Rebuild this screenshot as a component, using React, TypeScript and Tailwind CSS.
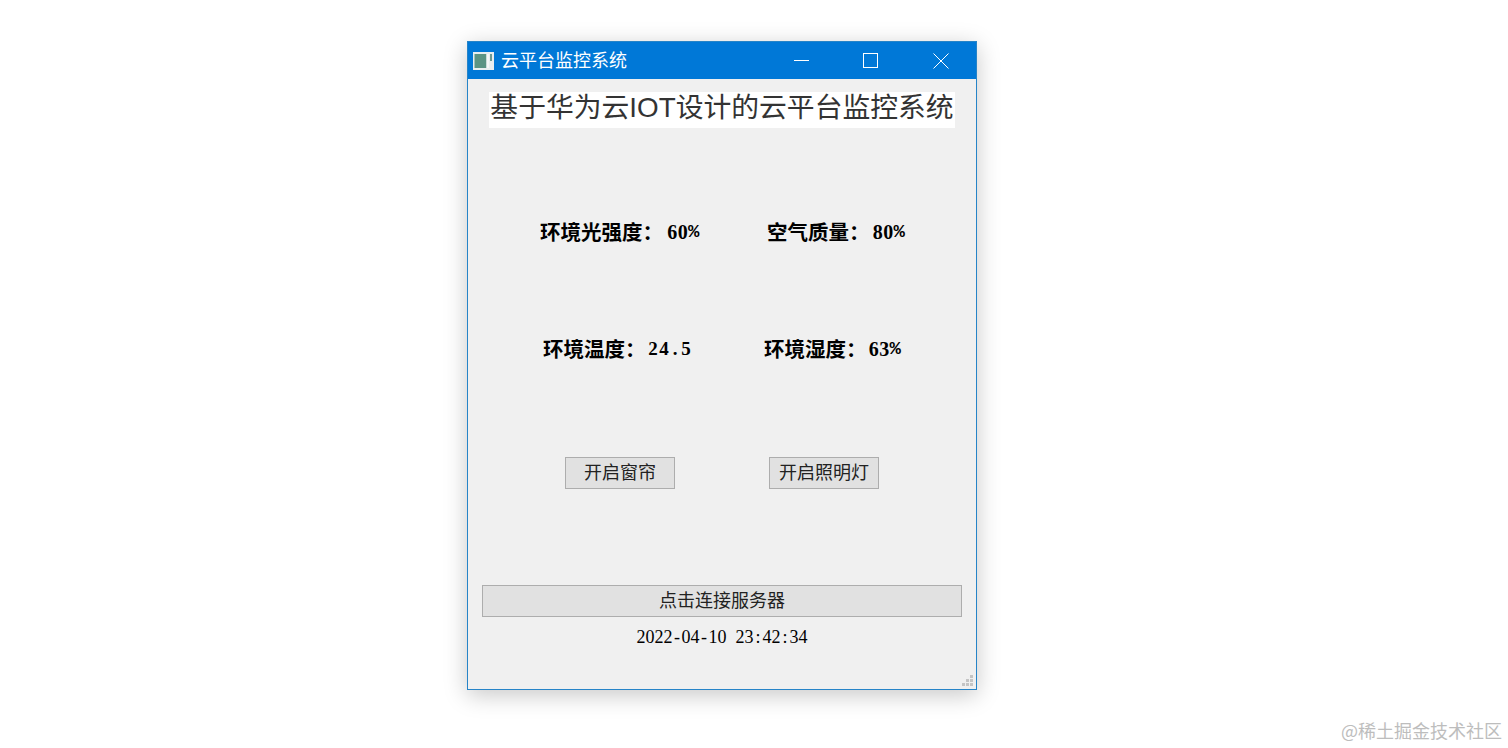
const cjk = { fontFamily: '"Noto Sans CJK SC", sans-serif' };
const serif = { fontFamily: '"Liberation Serif", "Noto Sans CJK SC", serif' };

function Fixed({ text, w }: { text: string; w: string }) {
  return (
    <>
      {text.split("").map((c, i) => (
        <span key={i} className={`inline-block text-center ${w}`}>
          {c === " " ? "\u00a0" : c}
        </span>
      ))}
    </>
  );
}

function Stat({ label, children }: { label: string; children: React.ReactNode }) {
  return (
    <div className="flex h-6 items-center whitespace-nowrap font-bold text-black leading-6">
      <span className="pb-[2px] text-[20.5px] font-bold" style={cjk}>{label}</span>
      {children}
    </div>
  );
}

function Button({ label, className }: { label: string; className: string }) {
  return (
    <button
      className={`flex h-8 items-center justify-center border border-[#adadad] bg-[#e1e1e1] pb-[4px] text-[18px] text-[#222] ${className}`}
      style={cjk}
    >
      {label}
    </button>
  );
}

function Percent({ digits, className }: { digits: string; className: string }) {
  return (
    <span className={`flex items-center font-bold ${className}`}>
      <span className="text-[20px]" style={serif}><Fixed text={digits} w="w-[10.5px]" /></span>
      <span className="text-[19px]" style={{ fontFamily: '"Liberation Mono", monospace' }}>%</span>
    </span>
  );
}

export default function App() {
  return (
    <div className="relative h-[748px] w-[1508px] overflow-hidden bg-white">
      <div className="ml-[467px] pt-[41px]">
        <div className="relative flex h-[649px] w-[510px] flex-col border border-[#2684c8] bg-[#f0f0f0] shadow-[0_5px_22px_rgba(0,0,0,0.22)]">
          {/* title bar */}
          <div className="flex h-[37px] shrink-0 items-center bg-[#0078d7] text-white">
            <svg className="ml-[5px] shrink-0" width="21" height="18" viewBox="0 0 21 18">
              <rect width="21" height="18" fill="#e8eef0" />
              <rect x="1.5" y="2" width="12" height="14" fill="#5a9484" />
              <rect x="13.5" y="2" width="2.5" height="14" fill="#f4f7f7" />
              <rect x="17" y="2" width="2" height="7" fill="#6d9a92" />
            </svg>
            <span className="ml-[7px] pb-[4px] text-[18px] leading-none" style={cjk}>云平台监控系统</span>
            <div className="ml-auto flex h-full">
              <div className="flex w-[70px] items-center justify-center pl-[1px]">
                <svg width="16" height="16" viewBox="0 0 16 16" stroke="white" fill="none"><path d="M0 7.5H15" /></svg>
              </div>
              <div className="flex w-[70px] items-center justify-center">
                <svg width="16" height="16" viewBox="0 0 16 16" stroke="white" fill="none"><rect x="0.5" y="0.5" width="14" height="14" /></svg>
              </div>
              <div className="flex w-[70px] items-center justify-center">
                <svg width="16" height="16" viewBox="0 0 16 16" stroke="white" fill="none"><path d="M0.5 0.5L15.5 15.5M15.5 0.5L0.5 15.5" /></svg>
              </div>
            </div>
          </div>

          {/* heading */}
          <div className="mt-[13px] flex justify-center">
            <h1 className="h-9 w-[466px] whitespace-nowrap bg-white text-center text-[27.8px] leading-[32px] text-[#333]" style={{ fontFamily: '"Liberation Sans", "Noto Sans CJK SC", sans-serif' }}>
              基于华为云IOT设计的云平台监控系统
            </h1>
          </div>

          {/* readings */}
          <div className="mt-[92px] grid grid-cols-[272px_1fr]">
            <div className="pl-[72px]">
              <Stat label="环境光强度："><Percent digits="60" className="ml-[4px]" /></Stat>
            </div>
            <div className="pl-[27px]">
              <Stat label="空气质量："><Percent digits="80" className="ml-[3px]" /></Stat>
            </div>
          </div>
          <div className="mt-[93px] grid grid-cols-[272px_1fr]">
            <div className="pl-[75px]">
              <Stat label="环境温度：">
                <span className="ml-[2px] text-[19px]" style={serif}><Fixed text="24.5" w="w-[11px]" /></span>
              </Stat>
            </div>
            <div className="pl-[24px]">
              <Stat label="环境湿度："><Percent digits="63" className="ml-[2px]" /></Stat>
            </div>
          </div>

          {/* toggles */}
          <div className="mt-[96px] grid grid-cols-[272px_1fr]">
            <div className="pl-[97px]"><Button label="开启窗帘" className="w-[110px]" /></div>
            <div className="pl-[29px]"><Button label="开启照明灯" className="w-[110px]" /></div>
          </div>

          {/* connect */}
          <div className="mt-[96px] px-[14px]">
            <Button label="点击连接服务器" className="w-[480px]" />
          </div>

          {/* timestamp */}
          <div className="mt-[8px] flex h-6 items-center justify-center whitespace-nowrap text-[18px] text-black" style={serif}>
            <Fixed text="2022-04-10 23:42:34" w="w-[9px]" />
          </div>

          {/* resize grip */}
          <svg className="absolute right-[3px] bottom-[3px]" width="11" height="11" viewBox="0 0 11 11" fill="#c4c4c4">
            <rect x="8" y="0" width="3" height="3" />
            <rect x="4" y="4" width="3" height="3" />
            <rect x="8" y="4" width="3" height="3" />
            <rect x="0" y="8" width="3" height="3" />
            <rect x="4" y="8" width="3" height="3" />
            <rect x="8" y="8" width="3" height="3" />
          </svg>
        </div>
      </div>

      {/* watermark */}
      <div className="absolute right-[6px] bottom-[6px] whitespace-nowrap text-[18px] leading-6 text-[#bdbdbd]" style={cjk}>
        @稀土掘金技术社区
      </div>
    </div>
  );
}
